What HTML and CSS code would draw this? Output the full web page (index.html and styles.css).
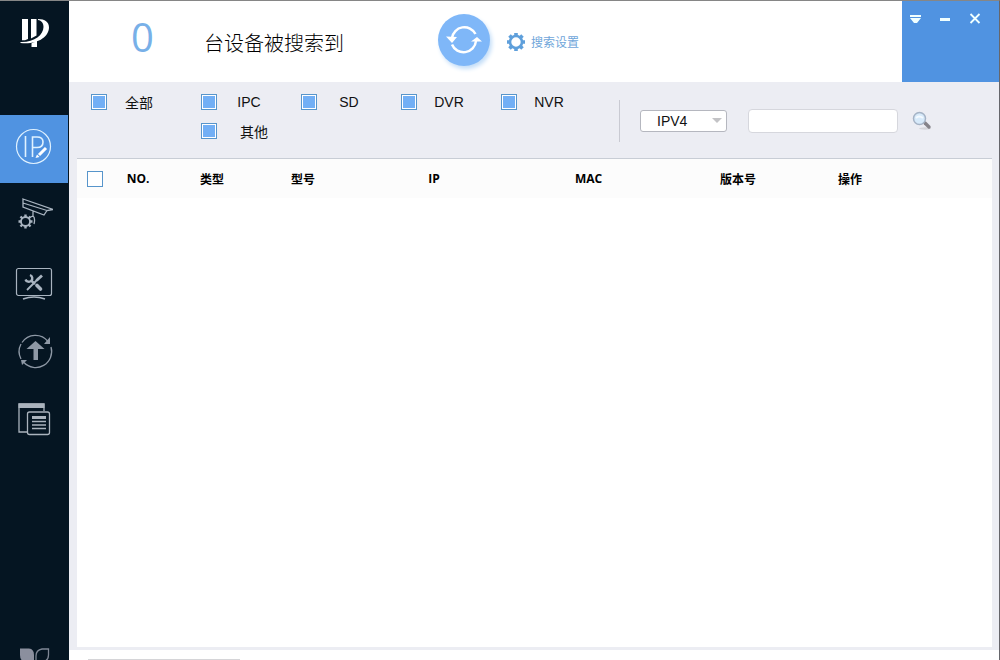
FILE: index.html
```html
<!DOCTYPE html>
<html lang="zh-CN">
<head>
<meta charset="utf-8">
<meta name="viewport" content="width=device-width, initial-scale=1">
<title>IP 设备工具</title>
<link rel="stylesheet" href="styles.css">
</head>
<body>
<div class="app">
  <aside class="sidebar">
    <div class="logo">
      <svg width="30" height="32" viewBox="0 0 30 32" role="img" aria-label="Logo">
        <path fill="#fff" d="M2 2H8V22L5 23.200H2Z M11 2H16.500V18.500L11 21.500Z M11.500 26.300L17 24.300V30H11.500Z M18 2C25 2 29 5 29 10.500C29 20 17 28 .500 26L.500 25C14 25.500 23.500 18 23.500 10C23.500 6 21.500 3.500 18 3Z"/>
      </svg>
    </div>
    <nav class="nav">
      <button class="nav-item active" type="button" aria-label="修改IP">
        <svg width="38" height="38" viewBox="0 0 38 38" fill="none" stroke="#e0f2ff" stroke-width="1.200">
          <circle cx="18.500" cy="18.500" r="17"/>
          <path stroke-width="1.600" d="M10.500 8V29M17.500 29V9H22C26.500 9 28 11 28 14C28 17.500 26 19.500 22 19.500H18"/>
          <path stroke="#fff" stroke-width="3" d="M24 27L31 20"/>
          <path stroke="none" fill="#fff" d="M20.500 30L22 26.500L24.500 29Z"/>
        </svg>
      </button>
      <button class="nav-item" type="button" aria-label="设备配置">
        <svg width="38" height="38" viewBox="0 0 38 38" fill="none" stroke="#a9b4c0" stroke-width="1.300">
          <path d="M8 3L38 13.500L32 14.500L29 19L8 11ZM8 7L32 14.500M18 15V20L15.500 21M18 20C20 21.500 20 24 19 28"/>
          <circle cx="10.500" cy="25.500" r="4.500" stroke-width="1.800"/>
          <path stroke-width="2.400" d="M10.500 18.500V21M10.500 30V32.500M3.500 25.500H6M15 25.500H17.500M5.500 20.500L7.500 22.500M13.500 28.500L15.500 30.500M5.500 30.500L7.500 28.500M13.500 22.500L15.500 20.500"/>
        </svg>
      </button>
      <button class="nav-item" type="button" aria-label="系统设置">
        <svg width="38" height="38" viewBox="0 0 38 38" fill="none" stroke="#a9b4c0">
          <rect x="1.500" y="4.500" width="35" height="27" rx="2" stroke-width="1.200"/>
          <path stroke-width="1.600" d="M8 35Q19 31 30 35"/>
          <path stroke-width="1.800" d="M24 14L12 26"/>
          <path stroke-width="3.600" stroke-linecap="round" d="M22 21.500L25.500 25"/>
          <path stroke-width="2.400" d="M15 11A3.500 3.500 0 1 1 10.500 15.500M16 16.500L20 20"/>
          <path stroke-width="2.800" d="M21.500 16.500L27 11.500"/>
        </svg>
      </button>
      <button class="nav-item" type="button" aria-label="升级">
        <svg class="shift" width="38" height="38" viewBox="0 0 38 38" fill="none" stroke="#8e98a5" stroke-width="1.300">
          <path d="M6 10.500A16 16 0 0 1 32 9.500M5 27A16 16 0 0 1 5 12M35 15A16 16 0 0 1 8 30.500"/>
          <path fill="#8e98a5" stroke="none" d="M34 5V12H28ZM5 28H11L6 33ZM19.500 9L28.500 17H22V28H17.500V17H10.500Z"/>
        </svg>
      </button>
      <button class="nav-item" type="button" aria-label="日志">
        <svg width="38" height="38" viewBox="0 0 38 38" fill="none" stroke="#aab3bd" stroke-width="1.300">
          <path d="M12 32H4V4H29V11"/>
          <path fill="#aab3bd" stroke="none" d="M3.500 3.500H29.500V8H3.500Z"/>
          <rect x="12.500" y="12" width="22" height="22.500" rx="2"/>
          <path stroke-width="3" d="M17 17.500H31"/>
          <path d="M17 21.500H31M17 25H31M17 28.500H31"/>
        </svg>
      </button>
    </nav>
    <button class="nav-more" type="button" aria-label="更多">
      <svg width="30" height="30" viewBox="0 0 30 30">
        <path fill="#8b8f9e" d="M0 .500H9Q14 1 14 7V14H7Q0 14 0 7Z"/>
        <path fill="none" stroke="#7f8795" stroke-width="1.300" d="M28.500 1H22Q16 2 16 8V14H22Q28.500 13 28.500 7Z"/>
      </svg>
    </button>
  </aside>

  <main class="main">
    <header class="header">
      <output class="count">0</output>
      <span class="found">台设备被搜索到</span>
      <button class="refresh" type="button" aria-label="刷新">
        <svg width="38" height="38" viewBox="0 0 38 38" fill="none" stroke="#fff" stroke-width="2.500">
          <path d="M7 17A12.500 12.500 0 0 1 30.500 13M31 20A12.500 12.500 0 0 1 7 23.500"/>
          <path fill="#fff" stroke="none" d="M1 15.500L12 16L7 22ZM26 20.500L32 16L37 20.500Z"/>
        </svg>
      </button>
      <button class="settings" type="button">
        <svg width="20" height="20" viewBox="0 0 20 20" fill="none" stroke="#5e9fdb">
          <circle cx="10" cy="10" r="6" stroke-width="2.600"/>
          <path stroke-width="3.600" d="M10 1V4M10 16V19M1 10H4M16 10H19M3.500 3.500L5.500 5.500M14.500 14.500L16.500 16.500M3.500 16.500L5.500 14.500M14.500 5.500L16.500 3.500"/>
        </svg>
        搜索设置
      </button>
      <div class="window-tools">
        <button type="button" aria-label="菜单"><svg width="14" height="14" viewBox="0 0 14 14"><path fill="#f0ffff" d="M2 4H13V6H2ZM2 7H13L9 12H6Z"/></svg></button>
        <button type="button" aria-label="最小化"><svg width="14" height="14" viewBox="0 0 14 14"><path fill="#f0ffff" d="M2 7H12V10H2Z"/></svg></button>
        <button type="button" aria-label="关闭"><svg width="14" height="14" viewBox="0 0 14 14"><path stroke="#f0ffff" stroke-width="1.800" d="M2.500 3L11.500 12M11.500 3L2.500 12"/></svg></button>
      </div>
    </header>

    <section class="filters">
      <div class="types">
        <label class="type"><input class="check" type="checkbox" checked><span class="type-name">全部</span></label>
        <label class="type"><input class="check" type="checkbox" checked><span class="type-name">IPC</span></label>
        <label class="type"><input class="check" type="checkbox" checked><span class="type-name">SD</span></label>
        <label class="type"><input class="check" type="checkbox" checked><span class="type-name">DVR</span></label>
        <label class="type"><input class="check" type="checkbox" checked><span class="type-name">NVR</span></label>
        <label class="type other"><input class="check" type="checkbox" checked><span class="type-name">其他</span></label>
      </div>
      <form class="search">
        <select class="protocol" aria-label="协议"><option>IPV4</option><option>IPV6</option></select>
        <input class="keyword" type="text" aria-label="关键字">
        <button class="find" type="button" aria-label="搜索">
          <svg width="20" height="20" viewBox="0 0 20 20">
            <ellipse cx="13" cy="17.500" rx="6" ry="1.200" fill="#d5d5da"/>
            <path stroke="#858389" stroke-width="3.400" stroke-linecap="round" d="M13 12L17 16"/>
            <circle cx="7.500" cy="7.500" r="6" fill="#d7eafa" stroke="#a5b3c5" stroke-width="1.500"/>
            <path fill="none" stroke="#f4faff" stroke-width="2" d="M4 7Q7 4 11 7"/>
          </svg>
        </button>
      </form>
    </section>

    <section class="devices">
      <table class="table">
        <colgroup>
          <col class="c-check"><col class="c-no"><col class="c-type"><col class="c-model"><col class="c-ip"><col class="c-mac"><col class="c-version"><col class="c-action"><col>
        </colgroup>
        <thead>
          <tr>
            <th><input class="check" type="checkbox" aria-label="全选"></th>
            <th>NO.</th><th>类型</th><th>型号</th><th>IP</th><th>MAC</th><th>版本号</th><th>操作</th><td></td>
          </tr>
        </thead>
      </table>
    </section>

    <footer class="footer"><input class="footer-field" type="text" aria-label="路径"></footer>
  </main>
</div>
</body>
</html>
```
FILE: styles.css
```css
* { box-sizing: border-box; }

body {
  margin: 0;
  font-family: "Liberation Sans", "Noto Sans CJK SC", sans-serif;
  font-size: 14px;
  color: #111;
}

button {
  border: 0;
  padding: 0;
  background: none;
  font: inherit;
  cursor: pointer;
}

svg { display: block; flex: none; }

.app {
  display: flex;
  height: 100vh;
  overflow: hidden;
  border-top: 1px solid #868686;
  border-right: 1px solid #66666b;
}

.sidebar {
  display: flex;
  flex-direction: column;
  flex: none;
  width: 69px;
  background: #051522;
}

.logo {
  height: 114px;
  padding: 16px 20px;
}

.nav-item {
  display: flex;
  align-items: center;
  justify-content: center;
  width: 68px;
  height: 68px;
  padding-bottom: 4px;
}

.nav { display: flex; flex-direction: column; }
.nav-item.active { background: #5093e1; }
.nav-item .shift { margin-left: 2px; }

.nav-more {
  height: 12px;
  margin-top: auto;
  padding-left: 20px;
  overflow: hidden;
}

.main {
  display: flex;
  flex-direction: column;
  flex: 1;
  min-width: 0;
  background: #ecedf3;
}

.header {
  display: flex;
  align-items: center;
  flex: none;
  height: 81px;
  padding-left: 62px;
  background: #fff;
}

.count {
  width: 73px;
  font-family: "Open Sans", sans-serif;
  font-size: 40px;
  line-height: 48px;
  padding-bottom: 10px;
  color: #78b0e8;
}

.found {
  width: 234px;
  padding-top: 2px;
  font-size: 20px;
  font-weight: 300;
  font-family: "Noto Sans CJK SC", sans-serif;
  color: #000;
}

.refresh {
  display: grid;
  place-items: center;
  width: 52px;
  height: 52px;
  margin-bottom: 3px;
  border-radius: 50%;
  background: #7fb7f8;
  box-shadow: 2px 3px 4px #c4def8;
}

.settings {
  display: flex;
  align-items: center;
  gap: 5px;
  margin-left: 16px;
  font-size: 12px;
  color: #6fa6da;
}

.window-tools {
  display: flex;
  align-self: stretch;
  align-items: flex-start;
  gap: 16px;
  width: 97px;
  margin-left: auto;
  padding: 10px 6px;
  background: #5093e1;
}

.filters {
  display: flex;
  flex: none;
  height: 76px;
  padding: 8px 22px 0;
}

.types {
  display: grid;
  grid-template-columns: 110px 100px 100px 100px 100px;
  grid-auto-rows: 24px;
  row-gap: 5px;
}

.type { display: flex; align-items: center; }
.type-name { width: 64px; text-align: center; }
.type.other { grid-column: 2; }
.other .type-name { width: 74px; }

.check {
  appearance: none;
  flex: none;
  width: 16px;
  height: 16px;
  margin: 0;
  border: 1px solid #5795cb;
  background: #fff;
}

.check:checked {
  padding: 1px;
  background: #72aff5 content-box;
  box-shadow: inset 0 0 0 1px #fff;
}

.search {
  display: flex;
  align-items: center;
  height: 42px;
  margin: 10px 0 0 18px;
  padding-left: 20px;
  border-left: 1px solid #c9cad2;
}

.protocol {
  appearance: none;
  width: 87px;
  height: 22px;
  padding: 0 16px;
  border: 1px solid #b5b7bf;
  border-radius: 3px;
  background: url("data:image/svg+xml,%3Csvg xmlns='http://www.w3.org/2000/svg' width='10' height='6'%3E%3Cpath fill='%23c3c3c6' d='M0 0h10L5 5z'/%3E%3C/svg%3E") no-repeat right 4px center #fff;
  font: inherit;
  color: #111;
}

.keyword {
  width: 150px;
  height: 24px;
  margin: 0 14px 0 21px;
  border: 1px solid #d6d7dd;
  border-radius: 4px;
  background: #fff;
}

.devices {
  flex: 1;
  min-height: 0;
  margin: 0 7px 3px 8px;
  border-top: 1px solid #c8cdd5;
  background: #fff;
}

.table {
  width: 100%;
  table-layout: fixed;
  border-collapse: collapse;
  font-family: "Open Sans", "Noto Sans CJK SC", sans-serif;
  font-size: 12px;
}

.table tr { height: 39px; background: #fcfcfc; }
.table th { padding: 0; text-align: center; vertical-align: middle; color: #000; }
.table .check { display: block; margin: 0 auto; }

.c-check { width: 36px; }
.c-no { width: 50px; }
.c-type { width: 98px; }
.c-model { width: 84px; }
.c-ip { width: 178px; }
.c-mac { width: 131px; }
.c-version { width: 168px; }
.c-action { width: 56px; }

.footer {
  flex: none;
  height: 10px;
  padding: 9px 19px 0;
  overflow: hidden;
  background: #fff;
}

.footer-field {
  display: block;
  width: 152px;
  height: 24px;
  border: 1px solid #d5d5d8;
}
```
